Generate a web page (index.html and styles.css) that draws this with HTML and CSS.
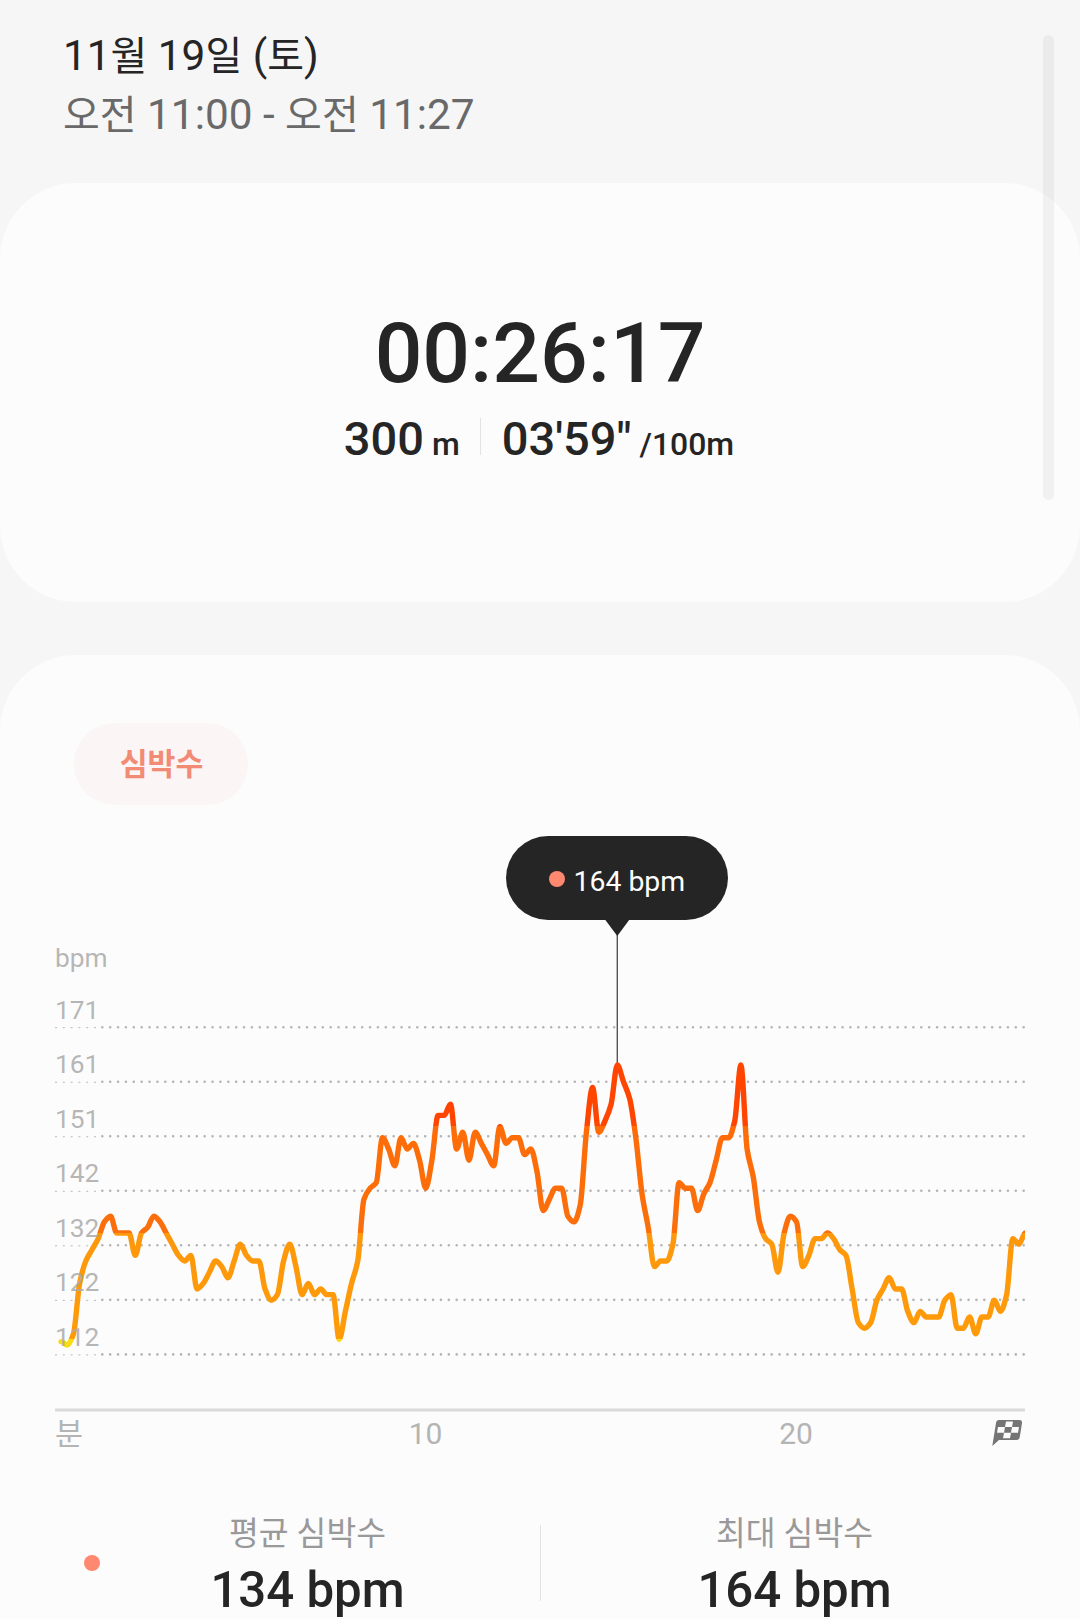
FILE: index.html
```html
<!DOCTYPE html>
<html lang="ko">
<head>
    <meta charset="UTF-8">
    <meta name="viewport" content="width=device-width, initial-scale=1.0">
    <title>수영 기록</title>
    <link rel="stylesheet" href="styles.css">
</head>
<body>

    <header class="header">
        <h1 class="date">11<span class="ko">월</span> 19<span class="ko">일</span> (<span class="ko">토</span>)</h1>
        <p class="time-range"><span class="ko">오전</span> 11:00 - <span class="ko">오전</span> 11:27</p>
    </header>

    <main class="cards">
        <section class="card summary">
            <div class="duration">00:26:17</div>
            <div class="details">
                <div class="detail"><span>300</span><small>m</small></div>
                <span class="detail-line"></span>
                <div class="detail"><span>03'59"</span><small>/100m</small></div>
            </div>
        </section>

        <section class="card heart">
            <div class="chip">심박수</div>

            <svg class="chart" viewBox="0 820 1080 650" width="1080" height="650">
                <defs>
                    <!-- Зоны пульса -->
                    <linearGradient id="zones" gradientUnits="userSpaceOnUse" x1="0" y1="1033" x2="0" y2="1433">
                        <stop offset="0.2325" stop-color="#ff4500"/>
                        <stop offset="0.2325" stop-color="#fe6c07"/>
                        <stop offset="0.5" stop-color="#fa6f0c"/>
                        <stop offset="0.5" stop-color="#fd980c"/>
                        <stop offset="0.765" stop-color="#ff9a08"/>
                        <stop offset="0.765" stop-color="#fadb14"/>
                    </linearGradient>
                    <clipPath id="plot">
                        <rect x="55" y="1000" width="970" height="420"/>
                    </clipPath>
                </defs>

                <g id="grid"></g>
                <path class="axis" d="M55 1410H1025"/>
                <path class="marker" d="M617.3 930V1065"/>
                <path id="line" class="line" clip-path="url(#plot)"/>
                <g id="labels" class="labels">
                    <text x="55" y="967">bpm</text>
                </g>

                <g class="minutes">
                    <text class="unit" x="55" y="1445">분</text>
                    <text x="425.5" y="1444" text-anchor="middle">10</text>
                    <text x="796" y="1444" text-anchor="middle">20</text>
                </g>

                <g class="flag">
                    <path d="M999 1420H1019.5Q1022.4 1420 1022 1423L1019.8 1437Q1019.3 1440 1016.5 1440H999L992.3 1446L996 1423Q996.5 1420 999 1420Z"/>
                    <path class="flag-cells" d="M1006 1421.5H1013L1012 1427H1005ZM998 1427H1005L1004 1432.7H997ZM1012 1427H1019L1018 1432.7H1011ZM1004 1432.7H1011L1010 1438.2H1003Z"/>
                </g>

                <g class="tooltip">
                    <rect x="506" y="836" width="222" height="84" rx="42"/>
                    <path d="M605 919.5H629.5L617.3 936Z"/>
                    <circle cx="557" cy="879" r="8"/>
                    <text x="573.5" y="891">164 bpm</text>
                </g>
            </svg>

            <div class="stats">
                <span class="dot"></span>
                <div class="stat">
                    <span class="stat-name">평균 심박수</span>
                    <b class="stat-value">134 bpm</b>
                </div>
                <div class="stat">
                    <span class="stat-name">최대 심박수</span>
                    <b class="stat-value">164 bpm</b>
                </div>
            </div>
        </section>
    </main>

    <div class="scrollbar"></div>

    <script src="script.js"></script>

</body>
</html>
```
FILE: styles.css
```css
* {
    box-sizing: border-box;
}
body {
    margin: 0;
    height: 1619px;
    overflow: hidden;
    background-color: #f6f6f6;
    color: #252525;
    font-family: Roboto, "Noto Sans CJK KR", sans-serif;
}
.header {
    height: 183px;
    padding: 26px 63px 0;
}
.date, .time-range {
    margin: 0;
    font-size: 42.3px;
    font-weight: 400;
    line-height: 60px;
    white-space: nowrap;
}
.time-range {
    margin-top: -2px;
    color: #696969;
}
.ko {
    font-size: 40px;
}
.cards {
    display: flex;
    flex-direction: column;
    gap: 53px;
}
.card {
    background-color: #fcfcfc;
    border-radius: 76px;
}
.summary {
    height: 419px;
    padding-top: 121px;
    text-align: center;
}
.duration {
    font-size: 84px;
    font-weight: 500;
    line-height: 100px;
}
.details {
    display: flex;
    justify-content: center;
    align-items: center;
    gap: 20.5px;
    margin-top: 7px;
    padding-right: 2px;
}
.detail {
    display: flex;
    align-items: baseline;
    gap: 8px;
    font-size: 47px;
    font-weight: 500;
    line-height: 56px;
}
.detail small {
    font-size: 31.9px;
}
.detail-line {
    width: 1px;
    height: 37px;
    margin-bottom: 10px;
    background-color: #e3e3e3;
}
.heart {
    height: 964px;
    padding-top: 68px;
    border-radius: 76px 76px 0 0;
}
.chip {
    width: 174px;
    height: 82px;
    margin-left: 74px;
    padding-left: 1px;
    border-radius: 41px;
    background-color: #fbf5f5;
    color: #f28b76;
    font-size: 30.3px;
    font-weight: 700;
    line-height: 84px;
    text-align: center;
}
.chart {
    display: block;
    margin-top: 15px;
}
.grid-line {
    fill: none;
    stroke: #b4b4b4;
    stroke-width: 2.6;
    stroke-linecap: round;
    stroke-dasharray: 0 7.875;
}
.grid-line-thin {
    fill: none;
    stroke: #b8b8b8;
    stroke-width: 1;
    stroke-dasharray: 2 5.8;
}
.axis {
    stroke: #dadada;
    stroke-width: 2.8;
}
.marker {
    stroke: #555;
    stroke-width: 1.4;
}
.line {
    fill: none;
    stroke: url(#zones);
    stroke-width: 5.4;
    stroke-linecap: round;
    stroke-linejoin: round;
}
.labels {
    fill: #aaa;
    fill-opacity: 0.85;
    font-size: 26.3px;
}
.minutes {
    fill: #b4b4b4;
    font-size: 30px;
}
.unit {
    font-size: 30.5px;
}
.flag {
    fill: #757575;
}
.flag-cells {
    fill: #fcfcfc;
}
.tooltip {
    fill: #252525;
    font-size: 28.4px;
}
.tooltip circle {
    fill: #ff8870;
}
.tooltip text {
    fill: #fff;
}
.stats {
    display: flex;
    align-items: flex-start;
    height: 149px;
    padding: 41px 30px 0 84px;
}
.dot {
    width: 16px;
    height: 16px;
    margin: 44px -25px 0 0;
    border-radius: 50%;
    background-color: #ff8870;
}
.stat {
    display: flex;
    flex-direction: column;
    align-items: center;
    width: 465px;
}
.stat:last-child {
    width: 509px;
    background: linear-gradient(#e3e3e3, #e3e3e3) no-repeat 0 14px / 1px 76px;
}
.stat-name {
    color: #999;
    font-size: 32.4px;
    line-height: 46px;
}
.stat-value {
    margin-top: 3px;
    font-size: 49.2px;
    font-weight: 500;
    line-height: 60px;
}
.scrollbar {
    position: absolute;
    top: 35px;
    left: 1043px;
    width: 11px;
    height: 465px;
    border-radius: 6px;
    background-color: rgba(0, 0, 0, 0.045);
}
```
FILE: script.js
```js
// Пульс, одно измерение каждые 10 секунд
const bpm = [
    114.6, 114, 116, 125, 129, 131, 133, 136, 137, 134, 134, 134, 130, 134, 135, 137,
    136, 134, 132, 130, 129, 130, 124, 125, 127, 129, 128, 126, 129, 132, 130, 129,
    129, 124, 122, 123, 129, 132, 128, 123, 125, 123, 124, 123, 123, 115, 120, 125,
    129, 140, 142, 143, 151, 149, 146, 151, 149, 150, 147, 142, 147, 155, 155, 157,
    149, 152, 147, 152, 150, 148, 146, 153, 150, 151, 151, 148, 149, 145, 138, 140,
    142, 142, 137, 136, 139, 152, 160, 152, 154, 157, 164, 161, 158, 151, 141, 135,
    128, 129, 129, 132, 143, 142, 142, 138, 141, 143, 147, 151, 151, 154, 164, 149,
    144, 136, 133, 132, 127, 134, 137, 136, 128, 130, 133, 133, 134, 133, 131, 130,
    124, 118, 117, 118, 122, 124, 126, 124, 124, 120, 118, 120, 119, 119, 119, 122,
    123, 117, 117, 119, 116, 119, 119, 122, 120, 123, 133, 132, 134
];

const step = 6.18;
const points = bpm.map((value, i) => ({
    x: 61.1 + i * step,
    y: 1065 + (164 - value) * 5.6
}));

// Наклон в точке: на пиках и плато он равен нулю
function slope(i) {
    if (i === 0 || i === points.length - 1) return 0;
    const a = points[i].y - points[i - 1].y;
    const b = points[i + 1].y - points[i].y;
    if (a * b <= 0) return 0;
    return 2 * a * b / (a + b) / step;
}

// Сглаженная линия пульса
let d = `M${points[0].x} ${points[0].y}`;
for (let i = 1; i < points.length; i++) {
    const p = points[i - 1];
    const q = points[i];
    const h = step / 3;
    d += `C${p.x + h} ${p.y + slope(i - 1) * h} ${q.x - h} ${q.y - slope(i) * h} ${q.x} ${q.y}`;
}
document.getElementById('line').setAttribute('d', d);

// Сетка и подписи шкалы
const scale = [171, 161, 151, 142, 132, 122, 112];
let grid = '';
let labels = '';
scale.forEach((value, i) => {
    const y = 1027.2 + i * 54.53;
    grid += `<path class="grid-line-thin" d="M55 ${y + 0.5}H99"/>`;
    grid += `<path class="grid-line" d="M102.3 ${y}H1024.5"/>`;
    labels += `<text x="55" y="${y - 8.7}">${value}</text>`;
});
document.getElementById('grid').innerHTML = grid;
document.getElementById('labels').innerHTML += labels;
```
